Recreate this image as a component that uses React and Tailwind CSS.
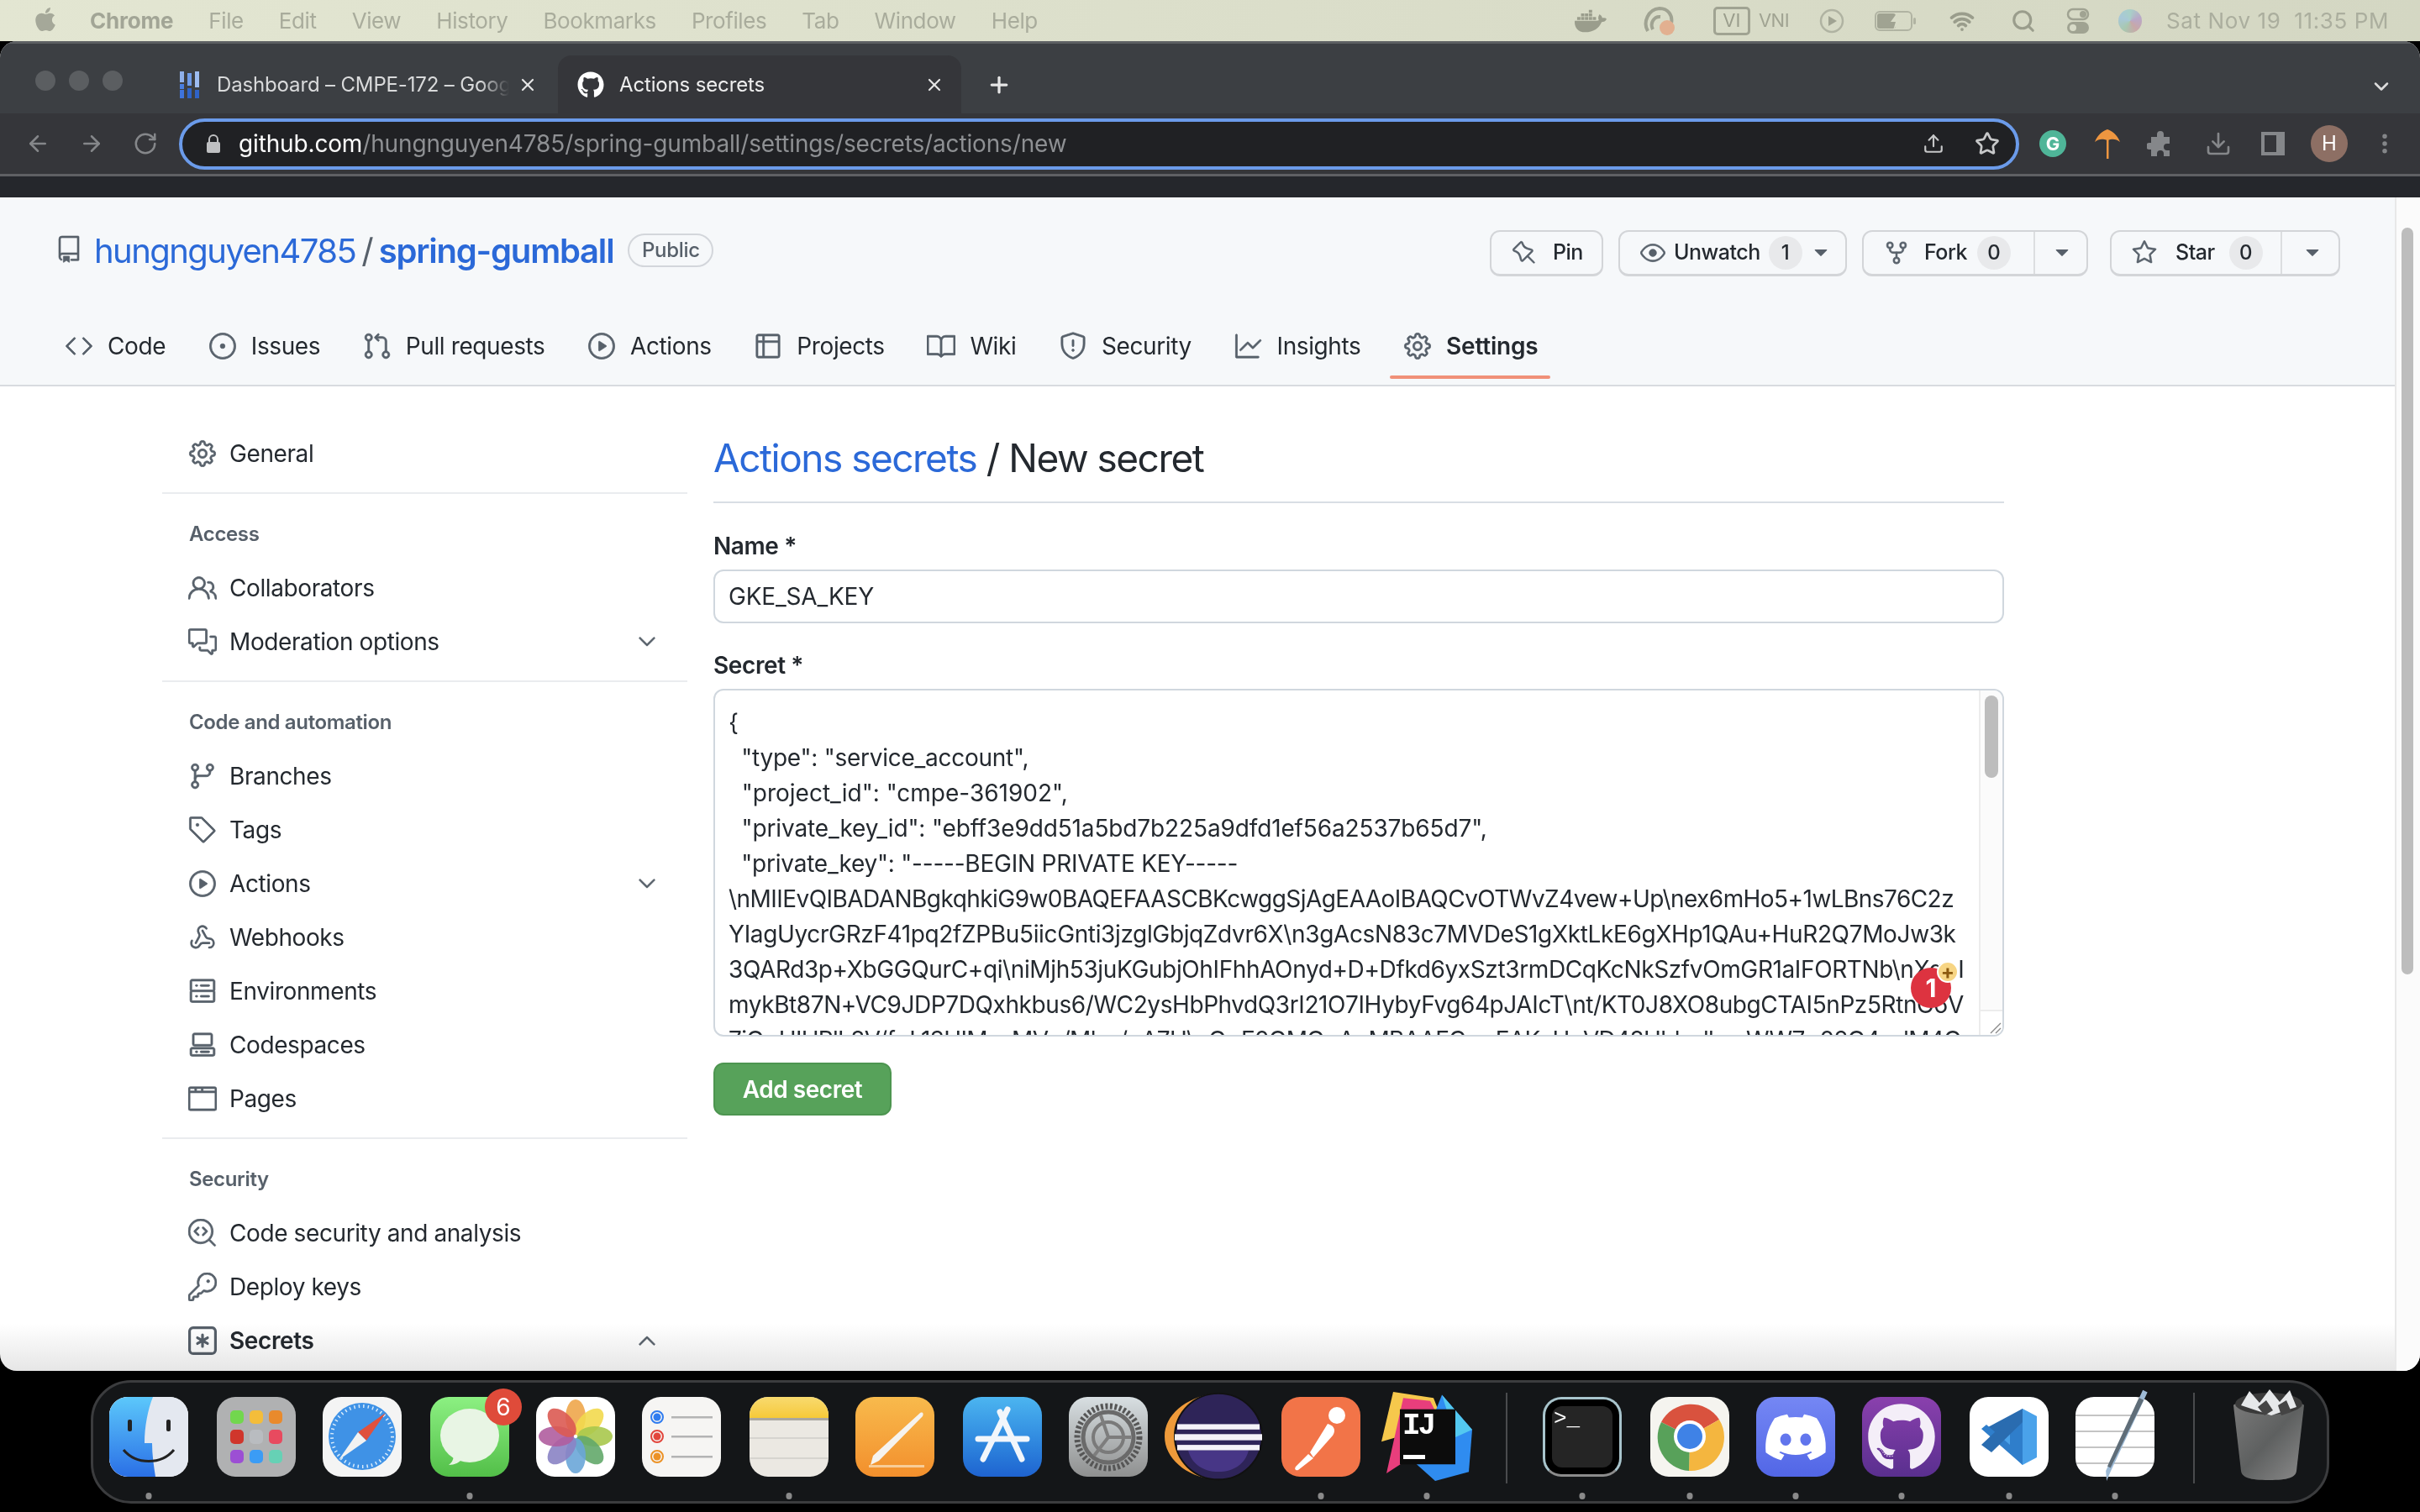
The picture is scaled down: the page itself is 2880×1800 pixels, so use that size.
import React from "react";
import { FaApple, FaDocker, FaDiscord, FaGithub } from "react-icons/fa";
import { ArrowLeft, ArrowRight, RotateCw, Plus, X, ChevronDown, Search, Wifi, Upload, Star, Download, EllipsisVertical, Webhook } from "lucide-react";
import {
  GoGear, GoPeople, GoCommentDiscussion, GoGitBranch, GoTag, GoPlay, GoServer, GoCodespaces, GoBrowser,
  GoCodescan, GoKey, GoRepo, GoCode, GoIssueOpened, GoGitPullRequest, GoTable, GoBook, GoShield, GoGraph,
  GoPin, GoEye, GoRepoForked, GoStar, GoTriangleDown, GoChevronDown, GoChevronUp,
} from "react-icons/go";

const GoMarkGithub = FaGithub;
const GoWebhook = () => <Webhook className="w-[32px] h-[32px] text-[#57606a] shrink-0 ml-[1px] mr-[1px]" strokeWidth={2} />;
const GoKeyAsterisk = ({ className }) => (
  <svg viewBox="0 0 16 16" className={className} fill="currentColor">
    <path d="M0 2.75A2.75 2.75 0 0 1 2.75 0h10.5A2.75 2.75 0 0 1 16 2.75v10.5A2.75 2.75 0 0 1 13.25 16H2.75A2.75 2.75 0 0 1 0 13.25ZM2.75 1.5c-.69 0-1.25.56-1.25 1.25v10.5c0 .69.56 1.25 1.25 1.25h10.5c.69 0 1.25-.56 1.25-1.25V2.75c0-.69-.56-1.25-1.25-1.25Z" />
    <path d="M8 4a.75.75 0 0 1 .75.75V6.7l1.69-.98a.75.75 0 1 1 .75 1.3L9.5 8l1.69.98a.75.75 0 1 1-.75 1.3L8.75 9.3v1.95a.75.75 0 0 1-1.5 0V9.3l-1.69.98a.75.75 0 1 1-.75-1.3L6.5 8l-1.69-.98a.75.75 0 1 1 .75-1.3l1.69.98V4.75A.75.75 0 0 1 8 4Z" />
  </svg>
);

const menus = ["File", "Edit", "View", "History", "Bookmarks", "Profiles", "Tab", "Window", "Help"];

function MenuBar() {
  return (
    <div className="h-[49px] shrink-0 flex items-center bg-gradient-to-r from-[#e3e6d2] to-[#d4d7c3] text-[#a9ac9c] text-[26px] pl-[40px] pr-[37px] [font-family:Inter,sans-serif]">
      <FaApple className="w-[28px] h-[32px] text-[#a5a899] -mt-[4px]" />
      <span className="ml-[39px] font-bold text-[#a2a596] tracking-[-0.2px]">Chrome</span>
      {menus.map((m) => (
        <span key={m} className="ml-[42px] tracking-[-0.4px]">{m}</span>
      ))}
      <div className="ml-auto flex items-center">
        <FaDocker className="w-[38px] h-[34px] text-[#9a9d8c]" />
        <svg viewBox="0 0 40 36" className="ml-[43px] w-[40px] h-[36px]">
          <path d="M6 30C0 20 6 4 20 3c10 0 16 8 14 18" fill="none" stroke="#a0a392" strokeWidth="4" />
          <path d="M12 28c-4-8 2-16 9-15" fill="none" stroke="#a0a392" strokeWidth="4" />
          <circle cx="29" cy="26" r="9" fill="#e2b090" />
        </svg>
        <span className="ml-[44px] w-[44px] h-[34px] border-[3px] border-[#a0a392] rounded-[5px] flex items-center justify-center text-[22px] text-[#9a9d8c]">VI</span>
        <span className="ml-[10px] text-[22px] text-[#a0a392] tracking-[-0.5px]">VNI</span>
        <svg viewBox="0 0 30 30" className="ml-[36px] w-[30px] h-[30px]">
          <circle cx="15" cy="15" r="13" fill="none" stroke="#b0b3a2" strokeWidth="2.5" />
          <path d="M11 9l10 6-10 6z" fill="#a0a392" />
        </svg>
        <svg viewBox="0 0 50 24" className="ml-[36px] w-[50px] h-[24px]">
          <rect x="1" y="1" width="43" height="22" rx="5" fill="none" stroke="#b0b3a2" strokeWidth="2" />
          <rect x="3" y="3" width="22" height="18" rx="3" fill="#a0a392" />
          <path d="M27 2l-8 11h6l-3 10 9-13h-6z" fill="#d8dbc8" />
          <rect x="46" y="8" width="3" height="8" rx="1.5" fill="#b0b3a2" />
        </svg>
        <Wifi className="ml-[36px] w-[36px] h-[30px] text-[#9a9d8c]" strokeWidth={3} />
        <Search className="ml-[40px] w-[30px] h-[30px] text-[#9a9d8c]" strokeWidth={2.5} />
        <svg viewBox="0 0 28 32" className="ml-[36px] w-[28px] h-[32px]">
          <rect x="2" y="2" width="24" height="12" rx="6" fill="none" stroke="#a0a392" strokeWidth="2.5" />
          <circle cx="20" cy="8" r="4" fill="#a0a392" />
          <rect x="1" y="17" width="26" height="14" rx="7" fill="#a0a392" />
          <circle cx="8" cy="24" r="4" fill="#d8dbc8" />
        </svg>
        <div className="ml-[34px] w-[28px] h-[28px] rounded-full bg-[conic-gradient(#a8d0c8,#b9a8c8,#c8a8a8,#a8c8b0,#a8c8d8,#a8d0c8)]" />
        <span className="ml-[29px] text-[26px] text-[#abae9e] tracking-[0.6px] whitespace-nowrap">Sat Nov 19&nbsp;&nbsp;11:35 PM</span>
      </div>
    </div>
  );
}

function JiraIcon() {
  return (
    <svg viewBox="0 0 24 32" className="w-[24px] h-[32px]">
      <rect x="0" y="0" width="5" height="13" fill="#8fb0ea" />
      <rect x="0" y="15" width="5" height="6" fill="#4a7fe0" />
      <rect x="0" y="22" width="5" height="10" fill="#3f74dc" />
      <rect x="9" y="2" width="5" height="15" fill="#6f9be8" />
      <rect x="9" y="20" width="5" height="12" fill="#2f63c8" />
      <rect x="18" y="0" width="5" height="19" fill="#9dbcf0" />
      <rect x="18" y="22" width="5" height="10" fill="#2f63c8" />
    </svg>
  );
}

function TabStrip() {
  return (
    <div className="h-[86px] shrink-0 bg-[#3c3f43] border-t-[3px] border-t-[#5d6063] flex items-end relative text-[24px] text-[#d9dadb]">
      <div className="flex gap-[16px] items-center absolute left-[42px] top-[32px]">
        <span className="w-[24px] h-[24px] rounded-full bg-[#5b5e61]" />
        <span className="w-[24px] h-[24px] rounded-full bg-[#5b5e61]" />
        <span className="w-[24px] h-[24px] rounded-full bg-[#5b5e61]" />
      </div>
      <div className="ml-[214px] w-[450px] h-[69px] flex items-center">
        <JiraIcon />
        <span className="ml-[20px] w-[348px] overflow-hidden whitespace-nowrap tracking-[-0.15px] [mask-image:linear-gradient(to_right,black_90%,transparent)]">Dashboard – CMPE-172 – Google Drive</span>
        <X className="ml-[10px] w-[24px] h-[24px] text-[#e6e6e6]" strokeWidth={2.2} />
      </div>
      <div className="w-[480px] h-[69px] bg-[#35363a] rounded-t-[16px] flex items-center pl-[23px] text-[#eeeeee]">
        <GoMarkGithub className="w-[32px] h-[32px] text-white" />
        <span className="ml-[18px] w-[363px] tracking-[-0.15px]">Actions secrets</span>
        <X className="w-[24px] h-[24px] text-[#e6e6e6]" strokeWidth={2.2} />
      </div>
      <div className="h-[69px] flex items-center ml-[30px]">
        <Plus className="w-[30px] h-[30px] text-[#e6e6e6]" strokeWidth={2.6} />
      </div>
      <div className="absolute right-[32px] top-[37px]">
        <ChevronDown className="w-[28px] h-[28px] text-[#dcdcdc]" strokeWidth={2.2} />
      </div>
    </div>
  );
}

function Toolbar() {
  return (
    <div className="h-[75px] shrink-0 bg-[#35363a] border-b-[3px] border-b-[#5f6064] flex items-center pl-[30px] [font-family:Inter,sans-serif]">
      <ArrowLeft className="w-[30px] h-[30px] text-[#85878a]" strokeWidth={2} />
      <ArrowRight className="ml-[34px] w-[30px] h-[30px] text-[#85878a]" strokeWidth={2} />
      <RotateCw className="ml-[34px] w-[30px] h-[30px] text-[#85878a]" strokeWidth={2} />
      <div className="ml-[25px] w-[2190px] h-[61px] shrink-0 rounded-full border-[4px] border-[#6b9bea] bg-[#202124] flex items-center pl-[28px] pr-[19px]">
        <svg viewBox="0 0 18 24" className="w-[18px] h-[24px]">
          <path d="M4 10V7a5 5 0 0 1 10 0v3" fill="none" stroke="#bfc0c2" strokeWidth="2" />
          <rect x="1" y="10" width="16" height="13" rx="2" fill="#bfc0c2" />
        </svg>
        <span className="ml-[21px] text-[28px] text-white tracking-[-0.15px]">github.com</span>
        <span className="text-[28px] text-[#8e9093] tracking-[-0.15px]">/hungnguyen4785/spring-gumball/settings/secrets/actions/new</span>
        <Upload className="ml-auto w-[26px] h-[30px] text-[#c6c7c8]" strokeWidth={2} />
        <Star className="ml-[36px] w-[30px] h-[30px] text-[#c6c7c8]" strokeWidth={2.2} />
      </div>
      <div className="ml-[24px] w-[32px] h-[32px] rounded-full bg-[#4fb598] flex items-center justify-center text-white text-[22px] font-bold">G</div>
      <svg viewBox="0 0 32 36" className="ml-[33px] w-[32px] h-[36px]">
        <path d="M1 16C5 6 11 3 16 1c5 2 11 5 15 15-5-4-9-4-15-2-6-2-10-2-15 2z" fill="#ee9640" />
        <rect x="15" y="12" width="2.5" height="24" fill="#ee9640" />
      </svg>
      <svg viewBox="0 0 32 32" className="ml-[31px] w-[32px] h-[32px]" fill="#85878a">
        <path d="M5 8h7V5a4 4 0 0 1 8 0v3h7v8h-3a4 4 0 0 0 0 8h3v7h-7v-3a4 4 0 0 0-8 0v3H5v-8h-2a4 4 0 0 1 0-8h2z" />
      </svg>
      <Download className="ml-[37px] w-[32px] h-[32px] text-[#85878a]" strokeWidth={2} />
      <div className="ml-[35px] w-[28px] h-[28px] border-[4px] border-[#85878a] border-r-[10px]" />
      <div className="ml-[31px] w-[44px] h-[44px] rounded-full bg-[#8d6f64] flex items-center justify-center text-white text-[24px]">H</div>
      <EllipsisVertical className="ml-[29px] w-[30px] h-[30px] text-[#85878a]" strokeWidth={2.4} />
    </div>
  );
}

const navs = [
  [GoCode, "Code"], [GoIssueOpened, "Issues"], [GoGitPullRequest, "Pull requests"], [GoPlay, "Actions"], [GoTable, "Projects"],
  [GoBook, "Wiki"], [GoShield, "Security"], [GoGraph, "Insights"], [GoGear, "Settings"],
];

function Btn({ icon: Icon, label, count, caret, split, w, gapA, gapB, gapC, gapD }) {
  return (
    <div className={w + " h-[55px] flex items-center border-[2px] border-[#d3d5d8] rounded-[12px] bg-[#f6f8fa] border-b-[3px] text-[25px] font-medium text-[#24292f] pl-[24px]"}>
      <Icon className="w-[30px] h-[30px] text-[#57606a] shrink-0 [stroke-width:0.5]" />
      <span className={gapA + " tracking-[-0.5px]"}>{label}</span>
      {count && <span className={gapB + " w-[40px] h-[40px] rounded-full bg-[#e8e9eb] flex items-center justify-center text-[24px]"}>{count}</span>}
      {split && <span className={gapC + " h-full border-l-[2px] border-l-[#dcdee0]"} />}
      {caret && <GoTriangleDown className={gapD + " w-[28px] h-[28px] text-[#57606a]"} />}
    </div>
  );
}

function RepoHeader() {
  return (
    <div className="h-[225px] shrink-0 bg-[#f6f8fa] border-b-[2px] border-b-[#d8dbdf] flex flex-col">
      <div className="flex items-start pl-[66px] pr-[95px] pt-[39px] h-[144px]">
        <GoRepo className="w-[32px] h-[34px] text-[#57606a] mt-[6px] [stroke-width:0.5]" />
        <a className="ml-[14px] text-[40px] leading-[50px] text-[#2b69d8] tracking-[-1.55px]">hungnguyen4785</a>
        <span className="ml-[7px] text-[40px] leading-[50px] text-[#57606a]">/</span>
        <a className="ml-[6px] text-[40px] leading-[50px] font-semibold text-[#2b69d8] tracking-[-1.2px]">spring-gumball</a>
        <span className="ml-[17px] mt-[4px] h-[40px] w-[102px] flex items-center justify-center rounded-full border-[2px] border-[#d3d6db] text-[24px] font-medium text-[#57606a] tracking-[-0.3px]">Public</span>
        <div className="ml-auto flex items-center gap-[18px]">
          <Btn icon={GoPin} label="Pin" w="w-[135px]" gapA="ml-[19px]" />
          <Btn icon={GoEye} label="Unwatch" count="1" caret w="w-[272px]" gapA="ml-[10px]" gapB="ml-[10px]" gapD="ml-[8px]" />
          <div className="mr-[8px]"><Btn icon={GoRepoForked} label="Fork" count="0" caret split w="w-[269px]" gapA="ml-[18px]" gapB="ml-[12px]" gapC="ml-[27px]" gapD="ml-[18px]" /></div>
          <Btn icon={GoStar} label="Star" count="0" caret split w="w-[274px]" gapA="ml-[22px]" gapB="ml-[17px]" gapC="ml-[21px]" gapD="ml-[22px]" />
        </div>
      </div>
      <div className="flex items-center gap-[50.7px] pl-[77px] h-[66px] relative text-[28px] text-[#24292f]">
        {navs.map(([Icon, label]) => (
          <div key={label} className="flex items-center gap-[17px] relative h-full">
            <Icon className="w-[34px] h-[34px] text-[#57606a] [stroke-width:0.5]" />
            <span className={label === "Settings" ? "font-semibold tracking-[-0.2px]" : "tracking-[-0.4px]"}>{label}</span>
            {label === "Settings" && <span className="absolute left-[-16px] right-[-15px] bottom-[-6px] h-[4px] bg-[#f09078] rounded-[2px]" />}
          </div>
        ))}
      </div>
    </div>
  );
}

function Row({ icon: Icon, label, chev, bold }) {
  return (
    <div className={"h-[64px] flex items-center pl-[31px] pr-[32px] text-[28px] text-[#24292f] tracking-[-0.4px]" + (bold ? " font-semibold" : "")}>
      <Icon className="w-[34px] h-[34px] text-[#57606a] shrink-0 [stroke-width:0.5]" />
      <span className="ml-[15px]">{label}</span>
      {chev === "down" && <GoChevronDown className="ml-auto w-[32px] h-[32px] text-[#57606a] [stroke-width:0.5]" />}
      {chev === "up" && <GoChevronUp className="ml-auto w-[32px] h-[32px] text-[#57606a] [stroke-width:0.5]" />}
    </div>
  );
}

function Label({ children }) {
  return <div className="h-[32px] mt-[32px] mb-[16px] pl-[32px] text-[24px] leading-[32px] font-semibold text-[#57606a] tracking-[-0.35px]">{children}</div>;
}

function Sidebar() {
  return (
    <div className="w-[625px] ml-[193px] pt-[48px] shrink-0">
      <Row icon={GoGear} label="General" />
      <div className="mt-[14px] border-t-[2px] border-t-[#eaecef]" />
      <Label>Access</Label>
      <Row icon={GoPeople} label="Collaborators" />
      <Row icon={GoCommentDiscussion} label="Moderation options" chev="down" />
      <div className="mt-[14px] border-t-[2px] border-t-[#eaecef]" />
      <Label>Code and automation</Label>
      <Row icon={GoGitBranch} label="Branches" />
      <Row icon={GoTag} label="Tags" />
      <Row icon={GoPlay} label="Actions" chev="down" />
      <Row icon={GoWebhook} label="Webhooks" />
      <Row icon={GoServer} label="Environments" />
      <Row icon={GoCodespaces} label="Codespaces" />
      <Row icon={GoBrowser} label="Pages" />
      <div className="mt-[14px] border-t-[2px] border-t-[#eaecef]" />
      <Label>Security</Label>
      <Row icon={GoCodescan} label="Code security and analysis" />
      <Row icon={GoKey} label="Deploy keys" />
      <Row icon={GoKeyAsterisk} label="Secrets" chev="up" bold />
      <div className="mx-[22px] mt-[6px] h-[40px] rounded-[12px] bg-[#e6e7e9]" />
    </div>
  );
}

const secretLines = [
  ["{", "tracking-[-0.4px]"],
  ['  "type": "service_account",', "tracking-[-0.26px]"],
  ['  "project_id": "cmpe-361902",', "tracking-[0px]"],
  ['  "private_key_id": "ebff3e9dd51a5bd7b225a9dfd1ef56a2537b65d7",', "tracking-[-0.13px]"],
  ['  "private_key": "-----BEGIN PRIVATE KEY-----', "tracking-[-0.23px]"],
  ["\\nMIIEvQIBADANBgkqhkiG9w0BAQEFAASCBKcwggSjAgEAAoIBAQCvOTWvZ4vew+Up\\nex6mHo5+1wLBns76C2z", "tracking-[-0.55px]"],
  ["YIagUycrGRzF41pq2fZPBu5iicGnti3jzglGbjqZdvr6X\\n3gAcsN83c7MVDeS1gXktLkE6gXHp1QAu+HuR2Q7MoJw3k", "tracking-[-0.36px]"],
  ["3QARd3p+XbGGQurC+qi\\niMjh53juKGubjOhIFhhAOnyd+D+Dfkd6yxSzt3rmDCqKcNkSzfvOmGR1aIFORTNb\\nXq+I", "tracking-[-0.38px]"],
  ["mykBt87N+VC9JDP7DQxhkbus6/WC2ysHbPhvdQ3rI21O7IHybyFvg64pJAIcT\\nt/KT0J8XO8ubgCTAI5nPz5RtnC6V", "tracking-[-0.41px]"],
  ["7iQ+UIUPlL8V/f+L13HIMxxMV+/Mb+/+A7U\\+Q+E0OMQ+A+MBAAEC++EAK+H+VD48Ubb+lbxxWW7+02Q4+dM4Q", "tracking-[-0.7px]"],
];

function Main() {
  return (
    <div className="ml-[31px] w-[1536px] shrink-0 pt-[48px]">
      <div className="h-[91px] border-b-[2px] border-b-[#d8dee4] text-[46px] leading-[74px] text-[#24292f] tracking-[-1.5px] whitespace-nowrap">
        <a className="text-[#2b69d8]">Actions secrets</a> / New secret
      </div>
      <div className="mt-[35px] h-[32px] text-[28px] leading-[32px] font-semibold text-[#24292f] tracking-[-0.4px]">Name *</div>
      <div className="mt-[12px] h-[64px] rounded-[12px] border-[2px] border-[#d0d7de] flex items-center pl-[16px] text-[28px] text-[#24292f] tracking-[-0.2px]">GKE_SA_KEY</div>
      <div className="mt-[34px] h-[32px] text-[28px] leading-[32px] font-semibold text-[#24292f] tracking-[-0.4px]">Secret *</div>
      <div className="mt-[12px] h-[414px] rounded-[12px] border-[2px] border-[#d0d7de] relative overflow-hidden flex">
        <div className="flex-1 min-w-0 pt-[17px] pl-[16px] overflow-hidden">
          {secretLines.map(([l, t], i) => (
            <div key={i} className={"h-[42px] leading-[42px] text-[28px] text-[#24292f] whitespace-pre " + t}>{l}</div>
          ))}
        </div>
        <div className="w-[28px] shrink-0 bg-[#fbfbfb] border-l-[2px] border-l-[#ececec] pt-[6px] pl-[5px] pr-[5px] relative">
          <div className="h-[98px] rounded-full bg-[#bdbdbd]" />
          <div className="absolute bottom-0 left-0 right-0 h-[30px] border-t-[2px] border-t-[#ececec] bg-white" />
          <svg viewBox="0 0 16 16" className="absolute right-[1px] bottom-[1px] w-[16px] h-[16px]">
            <path d="M15 3L3 15M15 9l-6 6" stroke="#8a8a8a" strokeWidth="1.4" />
          </svg>
        </div>
        <div className="absolute left-[1423px] top-[330px] w-[48px] h-[48px] rounded-full bg-[#dd3340] flex items-center justify-center text-white text-[30px] font-bold">1</div>
        <div className="absolute left-[1454px] top-[322px] w-[26px] h-[26px] rounded-full bg-[#f7d584] border-[2px] border-white flex items-center justify-center text-[#8c5a10] text-[24px] leading-none font-bold">+</div>
      </div>
      <div className="mt-[31px] w-[212px] h-[63px] rounded-[12px] bg-[#57a25a] border-[2px] border-[#4d9550] flex items-center justify-center text-white text-[28px] font-semibold tracking-[-0.45px]">Add secret</div>
    </div>
  );
}

function Tile({ className = "", children }) {
  return <div className={"w-[94px] h-[95px] rounded-[22px] overflow-hidden relative " + className}>{children}</div>;
}

const Dot = ({ on }) => <span className={"absolute left-1/2 -translate-x-1/2 top-[114px] w-[7px] h-[8px] rounded-full " + (on ? "bg-[#8a8a8a]" : "hidden")} />;

function Icon({ w = "w-[94px]", ml, dot, children }) {
  return (
    <div className={w + " h-[95px] relative shrink-0 " + ml}>
      {children}
      <Dot on={dot} />
    </div>
  );
}

function Dock() {
  return (
    <div className="absolute left-[108px] top-[1643px] w-[2664px] h-[147px] rounded-[48px] bg-[#141618] border-[3px] border-[#3b3c3e] flex items-start pt-[17px] pl-[19px] [font-family:Inter,sans-serif]">
      <Icon dot>
        <Tile className="bg-white">
          <svg viewBox="0 0 94 95" className="w-full h-full">
            <defs><linearGradient id="fb" x1="0" y1="0" x2="0" y2="1"><stop offset="0" stopColor="#5cc8fb" /><stop offset="1" stopColor="#2a6fe6" /></linearGradient></defs>
            <rect width="94" height="95" fill="#e4e8f0" />
            <path d="M0 0h52c-6 15-10 35-10 55h9c0 14 2 27 4 40H0z" fill="url(#fb)" />
            <rect x="22" y="27" width="5" height="14" rx="2" fill="#222" />
            <rect x="68" y="27" width="5" height="14" rx="2" fill="#222" />
            <path d="M17 63c15 18 45 18 60 0" fill="none" stroke="#222" strokeWidth="3" />
          </svg>
        </Tile>
      </Icon>
      <Icon ml="ml-[34px]">
        <Tile className="bg-[#b0b1b2] grid grid-cols-3 gap-[7px] p-[16px]">
          {["#72d74e", "#f4bd3a", "#e98a2c", "#d0362c", "#b9bcc0", "#e84a5f", "#9c4fd4", "#3b9cf5", "#66d1b5"].map((c) => (
            <span key={c} className="rounded-[5px]" style={{ background: c }} />
          ))}
        </Tile>
      </Icon>
      <Icon ml="ml-[32px]">
        <Tile className="bg-[#f4f4f4]">
          <svg viewBox="0 0 94 95" className="w-full h-full">
            <circle cx="47" cy="47" r="40" fill="#3f92e6" />
            <circle cx="47" cy="47" r="36" fill="none" stroke="#d8ebfb" strokeWidth="4" strokeDasharray="1.5 4" />
            <path d="M75 19L52 52 42 42z" fill="#e0513d" />
            <path d="M19 75L42 42 52 52z" fill="#f2f2f2" />
          </svg>
        </Tile>
      </Icon>
      <Icon ml="ml-[34px]" dot>
        <Tile className="bg-gradient-to-b from-[#8cf082] to-[#52bf48]">
          <svg viewBox="0 0 94 95" className="w-full h-full">
            <ellipse cx="47" cy="46" rx="35" ry="32" fill="#e8f5e4" />
            <path d="M28 68c0 6-2 10-6 13 7 0 13-3 17-8z" fill="#e8f5e4" />
          </svg>
        </Tile>
        <span className="absolute -right-[15px] -top-[10px] w-[44px] h-[44px] rounded-full bg-[#df4b3a] text-white text-[28px] flex items-center justify-center">6</span>
      </Icon>
      <Icon ml="ml-[32px]">
        <Tile className="bg-white">
          <svg viewBox="0 0 94 95" className="w-full h-full">
            {[["#eea64b", 0], ["#f2d94e", 45], ["#a8c84c", 90], ["#63a86a", 135], ["#6aa6d8", 180], ["#8a83c4", 225], ["#b05d9e", 270], ["#dc5a52", 315]].map(([c, a]) => (
              <ellipse key={a} cx="47" cy="24" rx="12" ry="21" fill={c} opacity="0.9" transform={`rotate(${a} 47 47)`} />
            ))}
          </svg>
        </Tile>
      </Icon>
      <Icon ml="ml-[32px]">
        <Tile className="bg-[#f6f5f3]">
          <svg viewBox="0 0 94 95" className="w-full h-full">
            {[[24, "#2f7cf0"], [47, "#e2463c"], [71, "#ec9226"]].map(([y, c]) => (
              <g key={y}>
                <circle cx="18" cy={y} r="7" fill="none" stroke={c} strokeWidth="2" />
                <circle cx="18" cy={y} r="4.5" fill={c} />
                <rect x="35" y={y - 1} width="49" height="2.5" fill="#b4b4b4" />
              </g>
            ))}
          </svg>
        </Tile>
      </Icon>
      <Icon ml="ml-[34px]" dot>
        <Tile className="bg-[#ebe8e2]">
          <div className="h-[25px] bg-gradient-to-b from-[#f8da6e] to-[#f6c935]" />
          <div className="h-[3px] bg-[#aaa7a0]" />
          <div className="mt-[20px] h-[2px] bg-[#d6d4cf]" />
          <div className="mt-[22px] h-[2px] bg-[#d6d4cf]" />
        </Tile>
      </Icon>
      <Icon ml="ml-[32px]">
        <Tile className="bg-gradient-to-b from-[#f8ba4c] to-[#f28f2c]">
          <svg viewBox="0 0 94 95" className="w-full h-full">
            <path d="M76 20c3-3 6-1 4 3L28 76l-10 5 3-11z" fill="#f6f3ee" />
            <rect x="16" y="81" width="66" height="3" fill="#f8cd98" />
          </svg>
        </Tile>
      </Icon>
      <Icon ml="ml-[34px]">
        <Tile className="bg-gradient-to-b from-[#4cb5f0] to-[#1f63d0]">
          <svg viewBox="0 0 94 95" className="w-full h-full" fill="none" stroke="#f2f6fb" strokeWidth="7" strokeLinecap="round">
            <path d="M53 15L24 74" /><path d="M44 18l26 56" /><path d="M18 50h58" />
          </svg>
        </Tile>
      </Icon>
      <Icon ml="ml-[32px]">
        <Tile className="bg-gradient-to-b from-[#d8dfe2] to-[#8f9090]">
          <svg viewBox="0 0 94 95" className="w-full h-full" fill="none">
            <circle cx="47" cy="48" r="37" stroke="#565656" strokeWidth="7" strokeDasharray="3 2.5" />
            <circle cx="47" cy="48" r="30" stroke="#6a6a6a" strokeWidth="5" />
            <circle cx="47" cy="48" r="18" stroke="#7a7a7a" strokeWidth="4" />
            <path d="M47 48L38 22M47 48L74 48M47 48L30 70" stroke="#7d7d7d" strokeWidth="4" />
          </svg>
        </Tile>
      </Icon>
      <Icon w="w-[117px]" ml="ml-[20px]">
        <svg viewBox="0 0 117 117" preserveAspectRatio="none" className="absolute top-[-6px] left-0 w-[117px] h-[107px]">
          <path d="M58 2C25 8 0 30 0 58s25 52 58 56C30 105 14 85 14 58S30 12 58 2z" fill="#ee9a3a" />
          <ellipse cx="64" cy="58" rx="52" ry="56" fill="#2e2458" stroke="#111" strokeWidth="2" />
          <path d="M28 76h72c-4 18-18 28-36 28s-32-10-36-28z" fill="#473686" />
          <rect x="15" y="42" width="98" height="7" fill="#f4f2f8" />
          <rect x="12" y="55" width="104" height="8" fill="#f4f2f8" />
          <rect x="15" y="69" width="98" height="7" fill="#f4f2f8" />
        </svg>
      </Icon>
      <Icon ml="ml-[22px]" dot>
        <Tile className="bg-[#f27448]">
          <svg viewBox="0 0 94 95" className="w-full h-full" fill="#fff">
            <circle cx="66" cy="22" r="10" />
            <path d="M55 32c8 2 10 8 6 14L38 72l-4-6z" />
            <path d="M32 68l6 5-18 14c-3 1-5-1-3-4z" />
          </svg>
        </Tile>
      </Icon>
      <Icon w="w-[108px]" ml="ml-[25px]" dot>
        <svg viewBox="0 0 108 118" preserveAspectRatio="none" className="absolute top-[-6px] left-0 w-[108px] h-[106px]">
          <path d="M14 0l48 8 12 34-74 24z" fill="#f6c84c" />
          <path d="M26 8l32 4 20 44-72 52z" fill="#e83e7c" />
          <path d="M72 4l36 46-4 56-40 12-24-24z" fill="#2f8cf0" />
          <path d="M72 4l36 46-20 10z" fill="#53c8f0" />
          <rect x="22" y="23" width="66" height="73" fill="#0c0c0c" />
        </svg>
        <span className="absolute left-[25px] top-[15px] text-[36px] leading-[40px] font-bold text-white [font-family:'Liberation_Mono',monospace] tracking-[-3px]">IJ</span>
        <span className="absolute left-[26px] top-[69px] w-[26px] h-[5px] bg-white" />
      </Icon>
      <div className="ml-[40px] mt-[-5px] w-[2px] h-[108px] bg-[#4a4b4d] shrink-0" />
      <Icon ml="ml-[42px]" dot>
        <Tile className="bg-black border-[3px] border-[#a8c4cc] border-b-[#8c8c8c]">
          <div className="absolute inset-[8px] rounded-[12px] bg-[#252525]" />
          <span className="absolute left-[10px] top-[4px] text-[26px] font-medium text-white [font-family:'Liberation_Mono',monospace]">&gt;_</span>
        </Tile>
      </Icon>
      <Icon ml="ml-[34px]" dot>
        <Tile className="bg-[#f5f4ef]">
          <svg viewBox="0 0 94 95" className="w-full h-full">
            <path d="M47 47L13 30A40 40 0 0 1 82 27z" fill="#d9523e" />
            <path d="M47 47L82 27A40 40 0 0 1 46 88z" fill="#f4b63f" />
            <path d="M47 47L46 88A40 40 0 0 1 13 30z" fill="#58a15a" />
            <circle cx="47" cy="47" r="19" fill="#fff" />
            <circle cx="47" cy="47" r="15" fill="#3f82e6" />
          </svg>
        </Tile>
      </Icon>
      <Icon ml="ml-[32px]" dot>
        <Tile className="bg-gradient-to-b from-[#7587f4] to-[#5266e6] flex items-center justify-center">
          <FaDiscord className="w-[78px] h-[78px] text-white" />
        </Tile>
      </Icon>
      <Icon ml="ml-[32px]" dot>
        <Tile className="bg-gradient-to-b from-[#8a40ad] to-[#5a2f8f] flex items-center justify-center">
          <GoMarkGithub className="w-[82px] h-[82px] text-[#f4eef8]" />
        </Tile>
      </Icon>
      <Icon ml="ml-[34px]" dot>
        <Tile className="bg-white">
          <svg viewBox="0 0 94 95" className="w-full h-full">
            <path d="M63 14l17 9v49l-17 9-30-30z" fill="#4aa2ea" />
            <path d="M63 14L33 48 20 37 63 14z" fill="#2a6cb0" />
            <path d="M63 14v67L14 38l6-5 28 24 0-26z" fill="#2f7ecb" />
            <path d="M14 57l36-34 13 -9L63 30 26 66z" fill="#2a6cb0" />
          </svg>
        </Tile>
      </Icon>
      <Icon ml="ml-[32px]" dot>
        <Tile className="bg-white">
          <div className="mt-[21px] h-[2px] bg-[#c4c4c4]" />
          <div className="mt-[17px] h-[2px] bg-[#c4c4c4]" />
          <div className="mt-[17px] h-[2px] bg-[#c4c4c4]" />
          <div className="mt-[17px] h-[2px] bg-[#c4c4c4]" />
        </Tile>
        <svg viewBox="0 0 60 120" className="absolute left-[30px] top-[-10px] w-[60px] h-[110px]">
          <path d="M52 2l6 3-48 103-5 12-1-13z" fill="#9dbad6" />
          <path d="M47 12l6 3-43 88-4-2z" fill="#5f6d78" />
        </svg>
      </Icon>
      <div className="ml-[46px] mt-[-5px] w-[2px] h-[108px] bg-[#4a4b4d] shrink-0" />
      <div className="ml-[45px] w-[86px] h-[110px] shrink-0 relative -mt-[10px]">
        <svg viewBox="0 0 86 110" className="w-full h-full">
          <defs><linearGradient id="tr" x1="0" y1="0" x2="1" y2="1"><stop offset="0" stopColor="#7a7a7a" /><stop offset="0.5" stopColor="#5e6060" /><stop offset="1" stopColor="#8b8b8b" /></linearGradient></defs>
          <path d="M1 20c0-6 84-6 84 0l-9 78c-1 8-10 11-33 11s-32-3-33-11z" fill="url(#tr)" />
          <ellipse cx="43" cy="18" rx="40" ry="13" fill="#3a3a3a" />
          <path d="M10 20l10-17 12 14 12-16 12 15 12-14 8 20-30 10z" fill="#e6e8ea" />
          <path d="M30 22l10-8 8 12-10 6zM54 20l10-6 6 14-12 4z" fill="#444" />
        </svg>
      </div>
    </div>
  );
}

export default function App() {
  return (
    <div className="relative w-[2880px] h-[1800px] bg-black overflow-hidden flex flex-col [font-family:Inter,sans-serif]">
      <MenuBar />
      <div className="h-[1583px] shrink-0 rounded-t-[20px] rounded-b-[20px] overflow-hidden flex flex-col bg-white relative">
        <TabStrip />
        <Toolbar />
        <div className="h-[25px] shrink-0 bg-[#25272c]" />
        <RepoHeader />
        <div className="flex flex-1 min-h-0">
          <Sidebar />
          <Main />
        </div>
        <div className="absolute left-0 right-[30px] top-[1527px] h-[56px] bg-gradient-to-b from-[#ffffff] to-[#e6e6e6] mix-blend-multiply" />
        <div className="absolute right-0 top-[186px] bottom-0 w-[30px] bg-[#fbfbfb] border-l-[2px] border-l-[#e8e8e8]">
          <div className="mt-[36px] ml-[6px] w-[14px] h-[889px] rounded-full bg-[#bdbdbd]" />
        </div>
      </div>
      <Dock />
    </div>
  );
}
